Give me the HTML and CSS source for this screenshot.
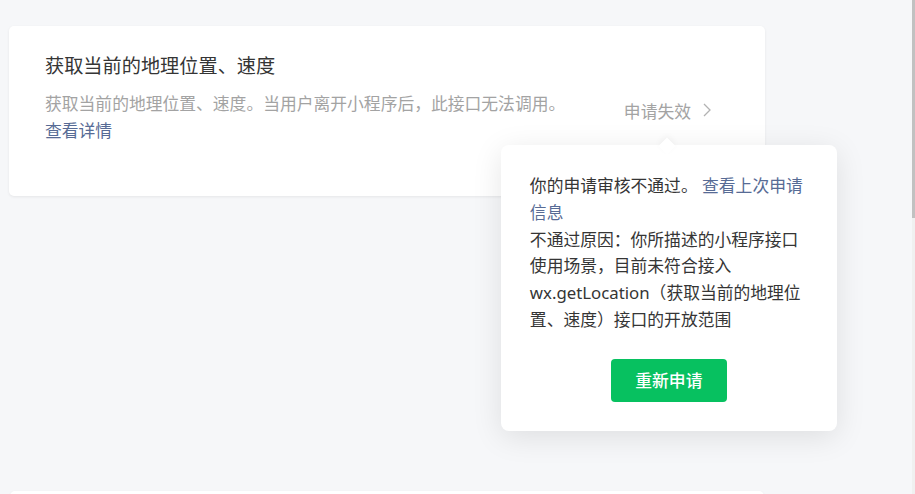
FILE: index.html
```html
<!DOCTYPE html>
<html lang="zh-CN">
<head>
<meta charset="utf-8">
<title>接口设置</title>
<link rel="stylesheet" href="styles.css">
</head>
<body>
<div class="page">
  <div class="card">
    <div class="info">
      <div class="title">获取当前的地理位置、速度</div>
      <div class="desc">获取当前的地理位置、速度。当用户离开小程序后，此接口无法调用。</div>
      <a class="link">查看详情</a>
    </div>
    <div class="status">
      <span class="status-text">申请失效</span>
      <svg class="chev" width="8" height="14" viewBox="0 0 8 14"><polyline points="1,1 7,7 1,13" fill="none" stroke="#b2b2b2" stroke-width="1.3"/></svg>
      <div class="popover">
        <div class="pop-body">
          <p class="pop-text">你的申请审核不通过。 <a class="link">查看上次申请信息</a></p>
          <p class="pop-text">不通过原因：你所描述的小程序接口使用场景，目前未符合接入wx.getLocation（获取当前的地理位置、速度）接口的开放范围</p>
        </div>
        <div class="pop-actions"><button class="btn">重新申请</button></div>
      </div>
    </div>
  </div>
  <div class="card card-next"></div>
</div>
<div class="scrollbar"><div class="thumb"></div></div>
</body>
</html>
```
FILE: styles.css
```css
html, body {
  margin: 0;
  padding: 0;
  background: #f6f7f9;
  height: 100%;
  overflow: hidden;
}
body {
  font-family: "Noto Sans", "Noto Sans CJK SC", sans-serif;
  color: #353535;
}
.page {
  padding: 26px 0 0 9px;
}
.card {
  box-sizing: border-box;
  width: 756px;
  height: 170px;
  background: #fff;
  border-radius: 5px;
  box-shadow: 0 1px 3px rgba(0, 0, 0, 0.07);
  display: flex;
  padding: 26px 54px 0 36px;
}
.card-next {
  margin-top: 295px;
  margin-left: 1px;
  width: 754px;
}
.info {
  flex: 1;
  display: flex;
  flex-direction: column;
  align-items: flex-start;
}
.title {
  font-size: 19.2px;
  line-height: 28px;
  color: #353535;
  margin-bottom: 10px;
}
.desc {
  font-size: 16.8px;
  line-height: 27px;
  color: #a3a3a3;
}
.link {
  font-size: 16.8px;
  line-height: 27px;
  color: #576b95;
  text-decoration: none;
  cursor: pointer;
}
.status {
  position: relative;
  display: flex;
  align-items: center;
  gap: 12px;
  margin-top: 46px;
  height: 27px;
  align-self: flex-start;
}
.status-text {
  font-size: 16.8px;
  line-height: 27px;
  color: #a3a3a3;
}
.chev {
  display: block;
  margin-top: -4px;
}
.popover {
  position: absolute;
  left: -123px;
  top: 47px;
  width: 336px;
  box-sizing: border-box;
  background: #fff;
  border-radius: 8px;
  box-shadow: 0 6px 30px rgba(0, 0, 0, 0.1);
  padding: 28px 29px 29px;
  z-index: 2;
}
.popover::before {
  content: "";
  position: absolute;
  top: -5px;
  left: 160px;
  width: 12px;
  height: 12px;
  background: #fff;
  transform: rotate(45deg);
  box-shadow: -2px -2px 6px rgba(0, 0, 0, 0.04);
}
.pop-body {
  position: relative;
}
.pop-text {
  margin: 0;
  font-size: 16.8px;
  line-height: 26.8px;
  color: #353535;
}
.pop-text .link {
  line-height: 26.8px;
}
.pop-actions {
  display: flex;
  justify-content: center;
  margin-top: 25px;
}
.btn {
  width: 116px;
  height: 43px;
  border: 0;
  border-radius: 4px;
  background: #07c160;
  color: #fff;
  font-family: "Noto Sans", "Noto Sans CJK SC", sans-serif;
  font-size: 16.8px;
  font-weight: 500;
  cursor: pointer;
}
.scrollbar {
  position: fixed;
  top: 0;
  right: 0;
  width: 3px;
  height: 100%;
  background: #f0f0f0;
}
.thumb {
  width: 3px;
  height: 218px;
  background: #c1c1c1;
}
```
